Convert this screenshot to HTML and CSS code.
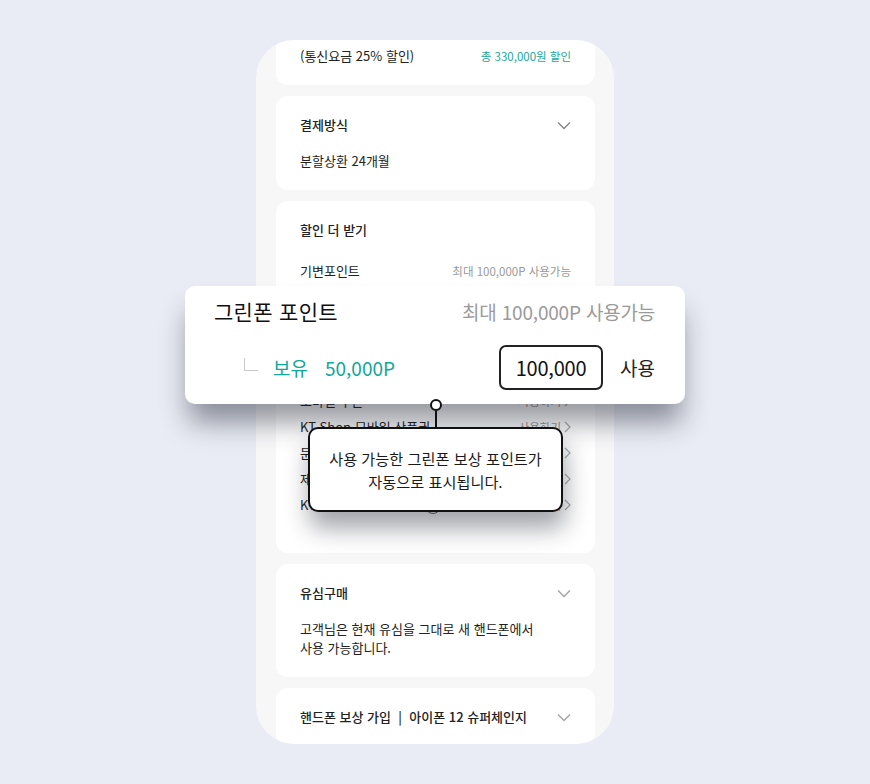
FILE: index.html
```html
<!DOCTYPE html>
<html lang="ko">

<head>
  <meta charset="UTF-8">
  <meta name="viewport" content="width=device-width, initial-scale=1.0">
  <title>할인 더 받기 - 그린폰 포인트</title>
  <link rel="stylesheet" href="styles.css">
</head>

<body>
  <main class="stage">
    <div class="phone">
      <section class="card card-top">
        <div class="row">
          <span class="label">(통신요금 25% 할인)</span>
          <span class="accent">총 330,000원 할인</span>
        </div>
      </section>

      <section class="card">
        <div class="card-head">
          <h2 class="card-title">결제방식</h2>
          <svg class="chevron" width="14" height="9" viewBox="0 0 14 9"><path d="M1 1.5l6 6 6-6" /></svg>
        </div>
        <p class="card-desc">분할상환 24개월</p>
      </section>

      <section class="card card-discount">
        <h2 class="card-title">할인 더 받기</h2>
        <ul class="point-list">
          <li><span class="label">기변포인트</span><span class="meta">최대 100,000P 사용가능</span></li>
          <li><span class="label">그린폰 포인트</span><span class="meta">최대 100,000P 사용가능</span></li>
          <li><span class="label sub">보유 50,000P</span><span class="meta">100,000 사용</span></li>
          <li><span class="label">KT 멤버십</span><span class="meta">최대 50,000P 사용가능</span></li>
          <li><span class="label">보유 멤버십</span><span class="meta">사용안함</span></li>
          <li><span class="label">모바일 쿠폰</span><span class="link">사용하기<svg width="7" height="12" viewBox="0 0 7 12"><path d="M1 1l5 5-5 5" /></svg></span></li>
          <li><span class="label">KT Shop 모바일 상품권</span><span class="link">사용하기<svg width="7" height="12" viewBox="0 0 7 12"><path d="M1 1l5 5-5 5" /></svg></span></li>
          <li><span class="label">문화상품권</span><span class="link">사용하기<svg width="7" height="12" viewBox="0 0 7 12"><path d="M1 1l5 5-5 5" /></svg></span></li>
          <li><span class="label">제휴카드 할인</span><span class="link">사용하기<svg width="7" height="12" viewBox="0 0 7 12"><path d="M1 1l5 5-5 5" /></svg></span></li>
          <li><span class="label">KT 멤버십 할인 혜택<i class="info-dot"></i></span><span class="link">사용하기<svg width="7" height="12" viewBox="0 0 7 12"><path d="M1 1l5 5-5 5" /></svg></span></li>
        </ul>
      </section>

      <section class="card">
        <div class="card-head">
          <h2 class="card-title">유심구매</h2>
          <svg class="chevron light" width="14" height="9" viewBox="0 0 14 9"><path d="M1 1.5l6 6 6-6" /></svg>
        </div>
        <p class="card-desc">고객님은 현재 유심을 그대로 새 핸드폰에서<br>사용 가능합니다.</p>
      </section>

      <section class="card">
        <div class="card-head">
          <h2 class="card-title">핸드폰 보상 가입 &nbsp;|&nbsp; 아이폰 12 슈퍼체인지</h2>
          <svg class="chevron light" width="14" height="9" viewBox="0 0 14 9"><path d="M1 1.5l6 6 6-6" /></svg>
        </div>
      </section>
    </div>

    <!-- enlarged row: 그린폰 포인트 -->
    <div class="point-popup">
      <div class="popup-head">
        <span class="popup-title">그린폰 포인트</span>
        <span class="popup-meta">최대 100,000P 사용가능</span>
      </div>
      <div class="popup-body">
        <i class="branch"></i>
        <span class="owned">보유</span>
        <span class="owned-value">50,000P</span>
        <span class="amount">100,000</span>
        <span class="apply">사용</span>
      </div>
    </div>

    <div class="callout">
      <i class="pin"></i>
      <i class="pin-line"></i>
      <div class="bubble">사용 가능한 그린폰 보상 포인트가<br>자동으로 표시됩니다.</div>
    </div>
  </main>
</body>

</html>
```

FILE: styles.css
```css
* {
  box-sizing: border-box;
}

body {
  margin: 0;
  background: #e9ecf4;
  font-family: "Noto Sans CJK KR", "Noto Sans", sans-serif;
  color: #222;
}

.stage {
  position: relative;
  width: 870px;
  height: 784px;
  padding-top: 40px;
}

.phone {
  width: 358px;
  height: 704px;
  margin: 0 auto;
  padding: 0 19px 0 20px;
  background: #f7f7f8;
  border-radius: 38px;
  overflow: hidden;
  display: flex;
  flex-direction: column;
  gap: 11px;
}

.card {
  flex-shrink: 0;
  background: #fff;
  border-radius: 12px;
  padding: 20px 24px;
}

.card-top {
  padding-top: 7px;
  border-radius: 0 0 12px 12px;
}

.row,
.card-head,
.point-list li {
  display: flex;
  align-items: center;
  justify-content: space-between;
}

.label {
  font-size: 13px;
  line-height: 18px;
}

.accent {
  font-size: 11.5px;
  color: #17a79b;
}

.card-title {
  margin: 0;
  font-size: 13px;
  line-height: 18px;
  font-weight: 500;
  color: #222;
}

.chevron {
  fill: none;
  stroke: #888;
  stroke-width: 1.5;
}

.chevron.light {
  stroke: #a5a5a5;
}

.card-desc {
  margin: 18px 0 0;
  font-size: 13px;
  line-height: 18px;
}

.card:nth-child(4) .card-desc {
  margin-top: 17px;
  line-height: 19px;
}

.card-discount {
  padding-bottom: 35px;
}

.point-list {
  list-style: none;
  margin: 19px 0 0;
  padding: 0;
}

.point-list li {
  height: 26px;
}

.meta,
.link {
  font-size: 11.5px;
  color: #999;
}

.link {
  display: flex;
  align-items: center;
  gap: 3px;
}

.link svg {
  fill: none;
  stroke: #aaa;
  stroke-width: 1.2;
}

.info-dot {
  display: inline-block;
  width: 16px;
  height: 16px;
  margin-left: 14px;
  vertical-align: middle;
  border: 1.5px solid #666;
  border-radius: 50%;
}

/* enlarged point row laid over the list */
.point-popup {
  position: absolute;
  left: 185px;
  top: 286px;
  width: 500px;
  height: 118px;
  padding: 11px 30px 14px 29px;
  background: #fff;
  border-radius: 10px;
  box-shadow: 0 22px 28px -4px rgba(20, 24, 40, 0.45);
}

.popup-head {
  display: flex;
  align-items: center;
  justify-content: space-between;
  height: 28px;
}

.popup-title {
  font-size: 21px;
  letter-spacing: 0.3px;
  color: #111;
}

.popup-meta {
  font-size: 19px;
  letter-spacing: -0.2px;
  color: #9a9a9a;
}

.popup-body {
  display: flex;
  align-items: center;
  height: 45px;
  margin-top: 20px;
  font-size: 19px;
}

.branch {
  width: 14px;
  height: 13px;
  margin: 0 15px 6px 30px;
  border-left: 1.5px solid #c9c9c9;
  border-bottom: 1.5px solid #c9c9c9;
}

.owned,
.owned-value {
  color: #13a69a;
}

.owned-value {
  margin-left: 17px;
}

.amount {
  margin-left: auto;
  width: 104px;
  height: 45px;
  display: flex;
  align-items: center;
  justify-content: center;
  border: 2px solid #222;
  border-radius: 7px;
  font-size: 20px;
  letter-spacing: -0.2px;
  color: #111;
}

.apply {
  margin-left: 17px;
  color: #222;
}

/* tooltip with pin */
.callout {
  position: absolute;
  left: 308px;
  top: 399px;
  width: 255px;
  display: flex;
  flex-direction: column;
  align-items: center;
}

.pin {
  width: 12px;
  height: 12px;
  border: 2px solid #111;
  border-radius: 50%;
  background: #fff;
}

.pin-line {
  width: 2px;
  height: 16px;
  background: #111;
}

.bubble {
  width: 255px;
  height: 85px;
  display: flex;
  align-items: center;
  justify-content: center;
  text-align: center;
  background: #fff;
  border: 2px solid #111;
  border-radius: 10px;
  font-size: 15.2px;
  line-height: 23px;
  color: #1a1a1a;
  box-shadow: 2px 16px 24px rgba(20, 24, 40, 0.4);
}
```
